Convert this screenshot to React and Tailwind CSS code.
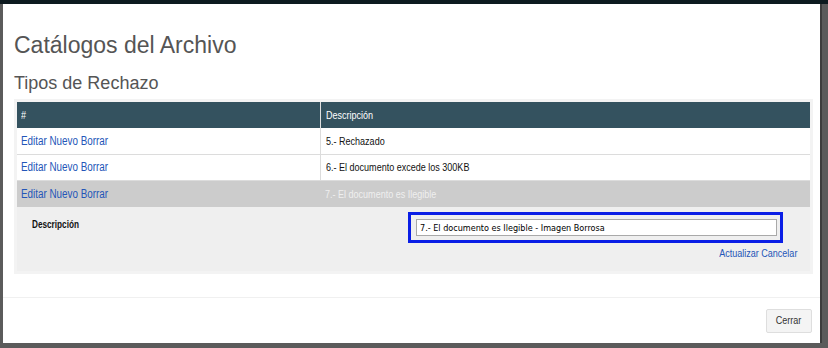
import React from 'react';

const rows = [
  { id: 5, text: '5.- Rechazado' },
  { id: 6, text: '6.- El documento excede los 300KB' },
];

// the page uses a narrow Arial; squeeze Liberation Sans to match its width
function Narrow({ children, className = '' }) {
  return <span className={`inline-block whitespace-nowrap scale-x-[0.82] ${className}`}>{children}</span>;
}

function LinkGroup() {
  return (
    <Narrow className="origin-left text-[#2456b8] text-[12px]">
      <a className="cursor-pointer">Editar</a> <a className="cursor-pointer">Nuevo</a>{' '}
      <a className="cursor-pointer">Borrar</a>
    </Narrow>
  );
}

export default function App() {
  return (
    <div className="h-[348px] w-[828px] overflow-hidden bg-[#5b5b5b] font-['Liberation_Sans',Arial,sans-serif] flex flex-col">
      {/* page header behind the modal */}
      <div className="h-[4px] bg-[#0d1a1f] shrink-0"></div>

      {/* modal */}
      <div className="ml-[3px] w-[819px] h-[339px] bg-white border-r-2 border-[#3d3d3d] flex flex-col shrink-0">
        <div className="px-[11px] pt-[29px]">
          <h1 className="text-[23px] leading-[24px] text-[#555]">Catálogos del Archivo</h1>
          <h2 className="mt-[16px] text-[18px] leading-[20px] text-[#555]">Tipos de Rechazo</h2>

          <div className="mt-[6px] bg-[#f3f3f3] p-[3px] w-[799px]">
            <table className="w-full border-collapse text-[11px] text-[#111]">
              <thead>
                <tr className="bg-[#34525f] text-white h-[26px]">
                  <th className="w-[303px] text-left font-normal pl-[4px] border-r border-[#e0e0e0]">
                    <Narrow className="origin-left">#</Narrow>
                  </th>
                  <th className="text-left font-normal pl-[5px]">
                    <Narrow className="origin-left">Descripción</Narrow>
                  </th>
                </tr>
              </thead>
              <tbody>
                {rows.map((r) => (
                  <tr key={r.id} className="bg-white h-[26px] border-b border-[#dcdcdc]">
                    <td className="pl-[4px] border-r border-[#dcdcdc]"><LinkGroup /></td>
                    <td className="pl-[5px]"><Narrow className="origin-left">{r.text}</Narrow></td>
                  </tr>
                ))}
                <tr className="bg-[#cccccc] h-[27px]">
                  <td className="pl-[4px]"><LinkGroup /></td>
                  <td className="pl-[5px] text-[#efefef]"><Narrow className="origin-left">7.- El documento es Ilegible</Narrow></td>
                </tr>
                <tr className="bg-[#efefef]">
                  <td colSpan={2} className="p-0">
                    <div className="flex h-[64px]">
                      <div className="w-[391px] pl-[15px] pt-[10px] font-bold text-[10px]">
                        <Narrow className="origin-left">Descripción</Narrow>
                      </div>
                      <div className="flex-1 pt-[5px] pr-[13px] flex flex-col items-end">
                        <div className="mr-[14px] w-[375px] h-[31px] border-[3px] border-[#0a1ee6] flex items-center pl-[5px]">
                          <input
                            readOnly
                            value="7.- El documento es Ilegible - Imagen Borrosa"
                            className="w-[361px] h-[17px] border border-[#a9a9a9] bg-white px-[3px] text-[9px] font-['DejaVu_Sans_Condensed','DejaVu_Sans',sans-serif] text-black outline-none"
                          />
                        </div>
                        <div className="mt-[2px] text-[#2456b8] text-[11px]">
                          <Narrow className="origin-right">
                            <a className="cursor-pointer">Actualizar</a> <a className="cursor-pointer">Cancelar</a>
                          </Narrow>
                        </div>
                      </div>
                    </div>
                  </td>
                </tr>
              </tbody>
            </table>
          </div>
        </div>

        {/* footer */}
        <div className="mt-auto border-t border-[#f0f0f0] h-[46px] flex items-center justify-end pr-[8px]">
          <button className="h-[24px] w-[46px] bg-[#f4f4f4] border border-[#dedede] rounded-[2px] text-[11px] text-[#333]">
            <Narrow className="origin-center">Cerrar</Narrow>
          </button>
        </div>
      </div>
    </div>
  );
}
